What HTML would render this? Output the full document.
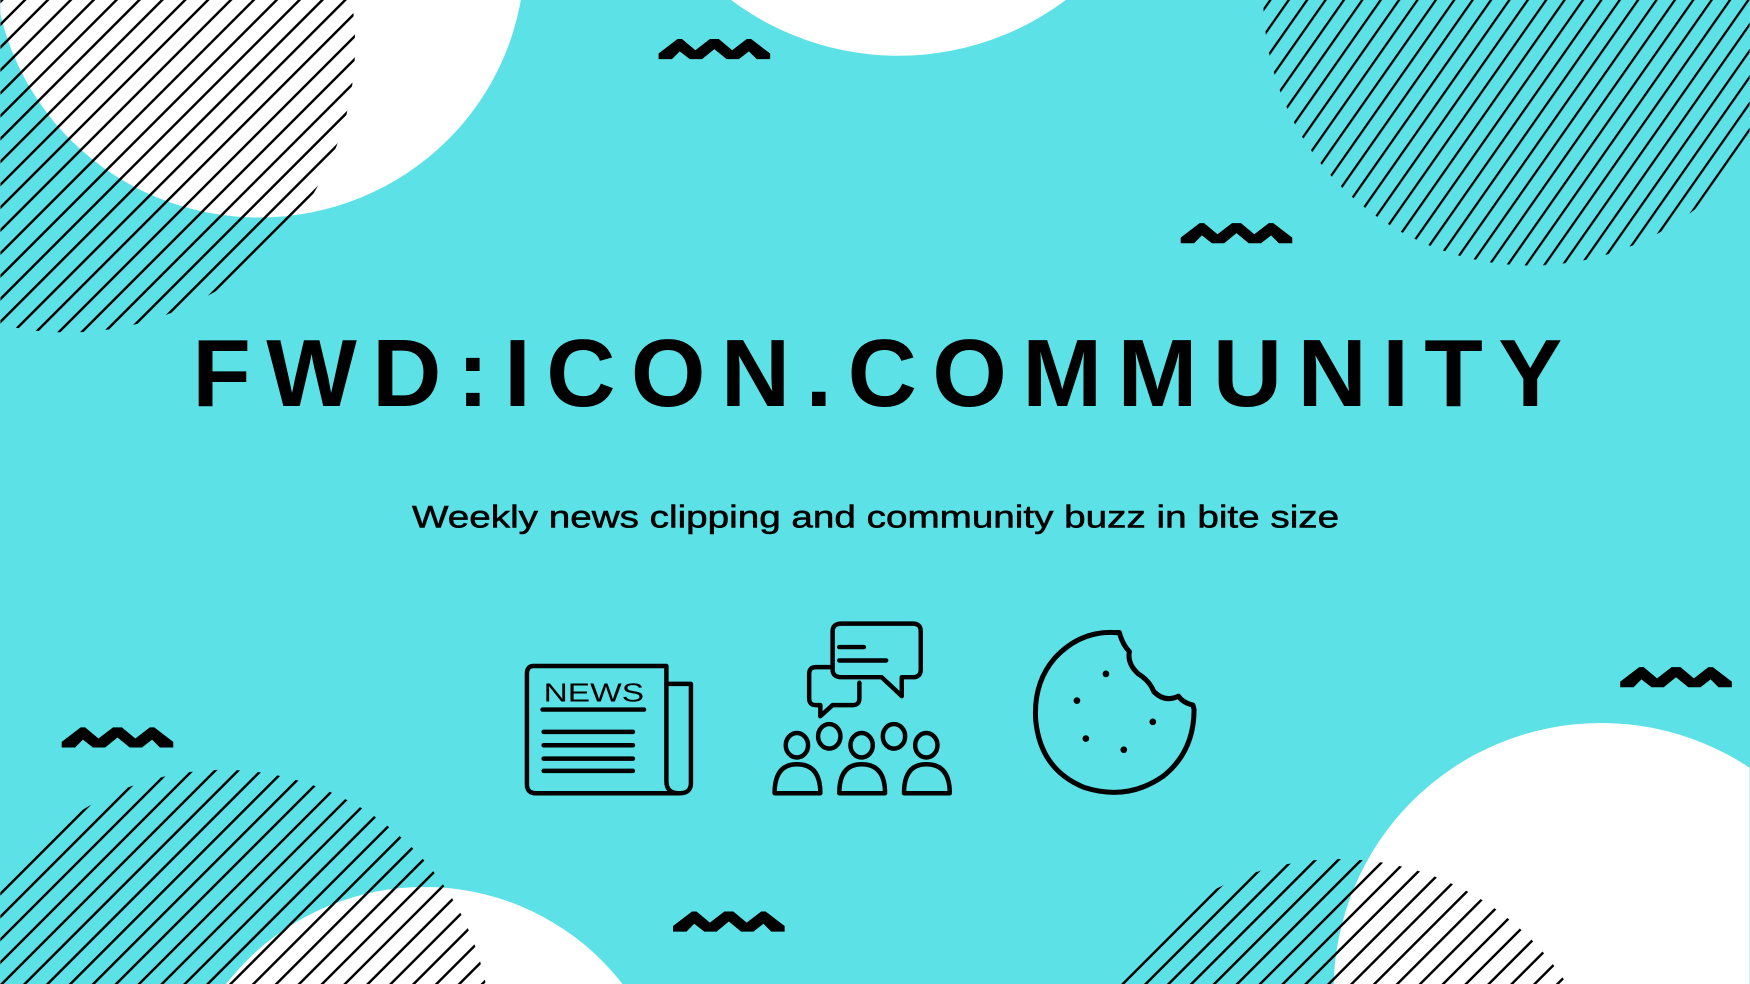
<!DOCTYPE html>
<html><head><meta charset="utf-8"><style>
html,body{margin:0;padding:0;width:1750px;height:984px;overflow:hidden;background:#5ce1e6}
svg{display:block;position:absolute;left:0;top:0;overflow:hidden}
</style></head><body>
<svg width="1750" height="984" viewBox="0 0 1568 882" xmlns="http://www.w3.org/2000/svg">
<defs>
<pattern id="h1" width="14.5" height="14.5" patternUnits="userSpaceOnUse" patternTransform="rotate(45)">
<line x1="0" y1="0" x2="0" y2="14.5" stroke="#000" stroke-width="4.4"/></pattern>
<pattern id="h2" width="13.5" height="13.5" patternUnits="userSpaceOnUse" patternTransform="rotate(35)">
<line x1="0" y1="0" x2="0" y2="13.5" stroke="#000" stroke-width="4"/></pattern>
<clipPath id="c1"><rect x="0" y="0" width="320" height="400"/></clipPath>
<clipPath id="fr"><rect x="0" y="0" width="1568" height="882"/></clipPath>
<polygon id="zz" points="0,18 0,13 17,0 21,0 33,10 46,0 54,0 66,10 79,0 83,0 100,13 100,18 88,18 81,11 72,18 61,18 50,9 39,18 28,18 19,11 12,18" fill="#000"/>
</defs>
<g clip-path="url(#fr)">
<rect width="1568" height="882" fill="#5ce1e6"/>
<!-- top-left -->
<ellipse cx="232" cy="-40" rx="238" ry="235" fill="#fff"/>
<circle cx="60" cy="40" r="258" fill="url(#h1)" clip-path="url(#c1)"/>
<!-- top center -->
<circle cx="805" cy="-200" r="250" fill="#fff"/>
<!-- top right -->
<circle cx="1372" cy="-2" r="240" fill="url(#h2)"/>
<!-- bottom right -->
<circle cx="1435" cy="888" r="240" fill="#fff"/>
<circle cx="1200" cy="1012" r="242" fill="url(#h1)"/>
<!-- bottom left -->
<circle cx="200" cy="930" r="240" fill="url(#h1)"/>
<circle cx="380" cy="1020" r="225" fill="#fff"/>
<clipPath id="c2"><circle cx="200" cy="930" r="240"/></clipPath>
<circle cx="380" cy="1020" r="225" fill="url(#h1)" clip-path="url(#c2)"/>
<!-- zigzags -->
<use href="#zz" x="590" y="35"/>
<use href="#zz" x="1058" y="200"/>
<use href="#zz" x="1452" y="598"/>
<use href="#zz" x="55" y="652"/>
<use href="#zz" x="603" y="817"/>
<!-- title -->
<text x="172" y="364" textLength="1228" lengthAdjust="spacing" font-family="Liberation Sans, sans-serif" font-weight="bold" font-size="86" fill="#000">FWD:ICON.COMMUNITY</text>
<text x="369" y="473" textLength="831" lengthAdjust="spacingAndGlyphs" font-family="Liberation Sans, sans-serif" font-size="28" fill="#000" stroke="#000" stroke-width="0.5">Weekly news clipping and community buzz in bite size</text>
<!-- newspaper -->
<g fill="none" stroke="#000" stroke-width="4" stroke-linecap="round" stroke-linejoin="round">
<path d="M478 597 H597 V700 Q597 711 608 711 H480 Q472 711 472 703 V604 Q472 597 478 597 Z"/>
<path d="M597 613 H619 V702 Q619 711 609 711"/>
<line x1="486" y1="636" x2="577" y2="636"/>
<line x1="487" y1="656" x2="567" y2="656"/>
<line x1="487" y1="668" x2="567" y2="668"/>
<line x1="487" y1="680" x2="567" y2="680"/>
<line x1="487" y1="691" x2="567" y2="691"/>
</g>
<text x="487" y="629" textLength="90" lengthAdjust="spacingAndGlyphs" font-family="Liberation Sans, sans-serif" font-size="23" fill="#000">NEWS</text>
<!-- community -->
<g fill="none" stroke="#000" stroke-width="4" stroke-linejoin="round" stroke-linecap="round">
<path d="M745 598 H731 Q725 598 725 604 V626 Q725 632 731 632 H735 V642 L746 632 H764 Q770 632 770 626 V612"/>
<path d="M754 559 H818 Q825 559 825 566 V600 Q825 607 818 607 H808 V624 L790 607 H754 Q746 607 746 600 V566 Q746 559 754 559 Z"/>
<line x1="752" y1="580" x2="774" y2="580"/>
<line x1="752" y1="592" x2="794" y2="592"/>
<ellipse cx="714" cy="668" rx="10" ry="11"/>
<ellipse cx="743" cy="660" rx="10" ry="11"/>
<ellipse cx="772" cy="668" rx="10" ry="11"/>
<ellipse cx="801" cy="660" rx="10" ry="11"/>
<ellipse cx="830" cy="668" rx="10" ry="11"/>
<path d="M694 711 Q694 685 714 685 Q735 685 735 711 Z"/>
<path d="M752 711 Q752 685 772 685 Q793 685 793 711 Z"/>
<path d="M810 711 Q810 685 830 685 Q851 685 851 711 Z"/>
</g>
<!-- cookie -->
<path d="M1000 567 Q968 565 945 590 Q926 612 928 645 Q932 690 972 706 Q1010 718 1042 696 Q1070 674 1070 636 L1069 632 Q1060 630 1056 624 Q1044 630 1034 620 Q1030 610 1020 604 Q1010 595 1012 584 Q1006 578 1003 567 Z" fill="none" stroke="#000" stroke-width="4.5" stroke-linejoin="round"/>
<g fill="#000"><circle cx="991" cy="604" r="3"/><circle cx="965" cy="628" r="3"/><circle cx="1033" cy="647" r="3"/><circle cx="973" cy="662" r="3"/><circle cx="1007" cy="672" r="3"/></g>
</g>
</svg>
</body></html>
